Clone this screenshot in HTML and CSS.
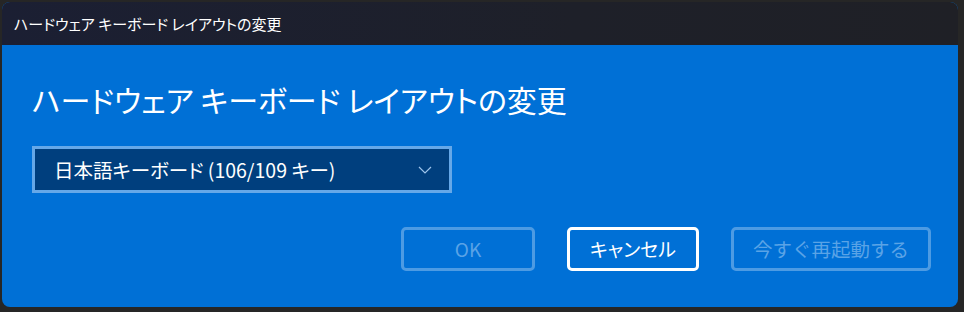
FILE: index.html
```html
<!DOCTYPE html>
<html lang="ja">
<head>
<meta charset="utf-8">
<link rel="stylesheet" href="styles.css">
</head>
<body>
<div class="window">
  <div class="titlebar">ハードウェア キーボード レイアウトの変更</div>
  <div class="content">
    <h1 class="heading">ハードウェア キーボード レイアウトの変更</h1>
    <div class="select">
      <span class="select-text">日本語キーボード (106/109 キー)</span>
      <svg class="chevron" width="14" height="8" viewBox="0 0 14 8"><path d="M1 1 L7 7 L13 1" fill="none" stroke="#9cc3ea" stroke-width="1.2"/></svg>
    </div>
    <div class="buttons">
      <div class="btn btn-disabled btn-ok">OK</div>
      <div class="btn btn-primary">キャンセル</div>
      <div class="btn btn-disabled btn-restart">今すぐ再起動する</div>
    </div>
  </div>
</div>
</body>
</html>
```

FILE: styles.css
```css
html, body {
  margin: 0;
  padding: 0;
}
body {
  width: 964px;
  height: 312px;
  background: #262626;
  font-family: "Noto Sans CJK JP", "Noto Sans", sans-serif;
  font-feature-settings: "palt";
  overflow: hidden;
}
.window {
  margin: 2px 0 0 2px;
  width: 956px;
  height: 305px;
  border-radius: 8px;
  overflow: hidden;
  display: flex;
  flex-direction: column;
  background: #0070d6;
}
.titlebar {
  height: 43px;
  flex: none;
  background: linear-gradient(90deg, #1b1f33 0%, #1e2029 60%, #1f2026 100%);
  color: #ffffff;
  font-size: 15px;
  line-height: 43px;
  padding-left: 12px;
}
.content {
  flex: 1;
  display: flex;
  flex-direction: column;
  padding: 35px 27px 0 30px;
}
.heading {
  margin: 0;
  font-weight: 400;
  font-size: 30px;
  line-height: 38px;
  color: #ffffff;
}
.select {
  margin-top: 28px;
  height: 41px;
  border: 3px solid #66a8e8;
  background: #003f7e;
  display: flex;
  align-items: center;
  justify-content: space-between;
  padding: 0 17px 0 19px;
  box-sizing: content-box;
  width: 378px;
}
.select-text {
  color: #ffffff;
  font-size: 19.5px;
  line-height: 24px;
}
.chevron {
  display: block;
}
.buttons {
  margin-top: 34px;
  display: flex;
  justify-content: flex-end;
  gap: 32px;
}
.btn {
  height: 38px;
  border-radius: 5px;
  display: flex;
  align-items: center;
  justify-content: center;
  font-size: 19px;
  line-height: 24px;
}
.btn-ok {
  width: 128px;
}
.btn-restart {
  width: 194px;
  font-size: 19.5px;
  font-feature-settings: normal;
}
.btn-primary {
  width: 126px;
  border: 3px solid #ffffff;
  color: #ffffff;
}
.btn-disabled {
  border: 3px solid #4d9be3;
  color: #5aa3e6;
}
```
